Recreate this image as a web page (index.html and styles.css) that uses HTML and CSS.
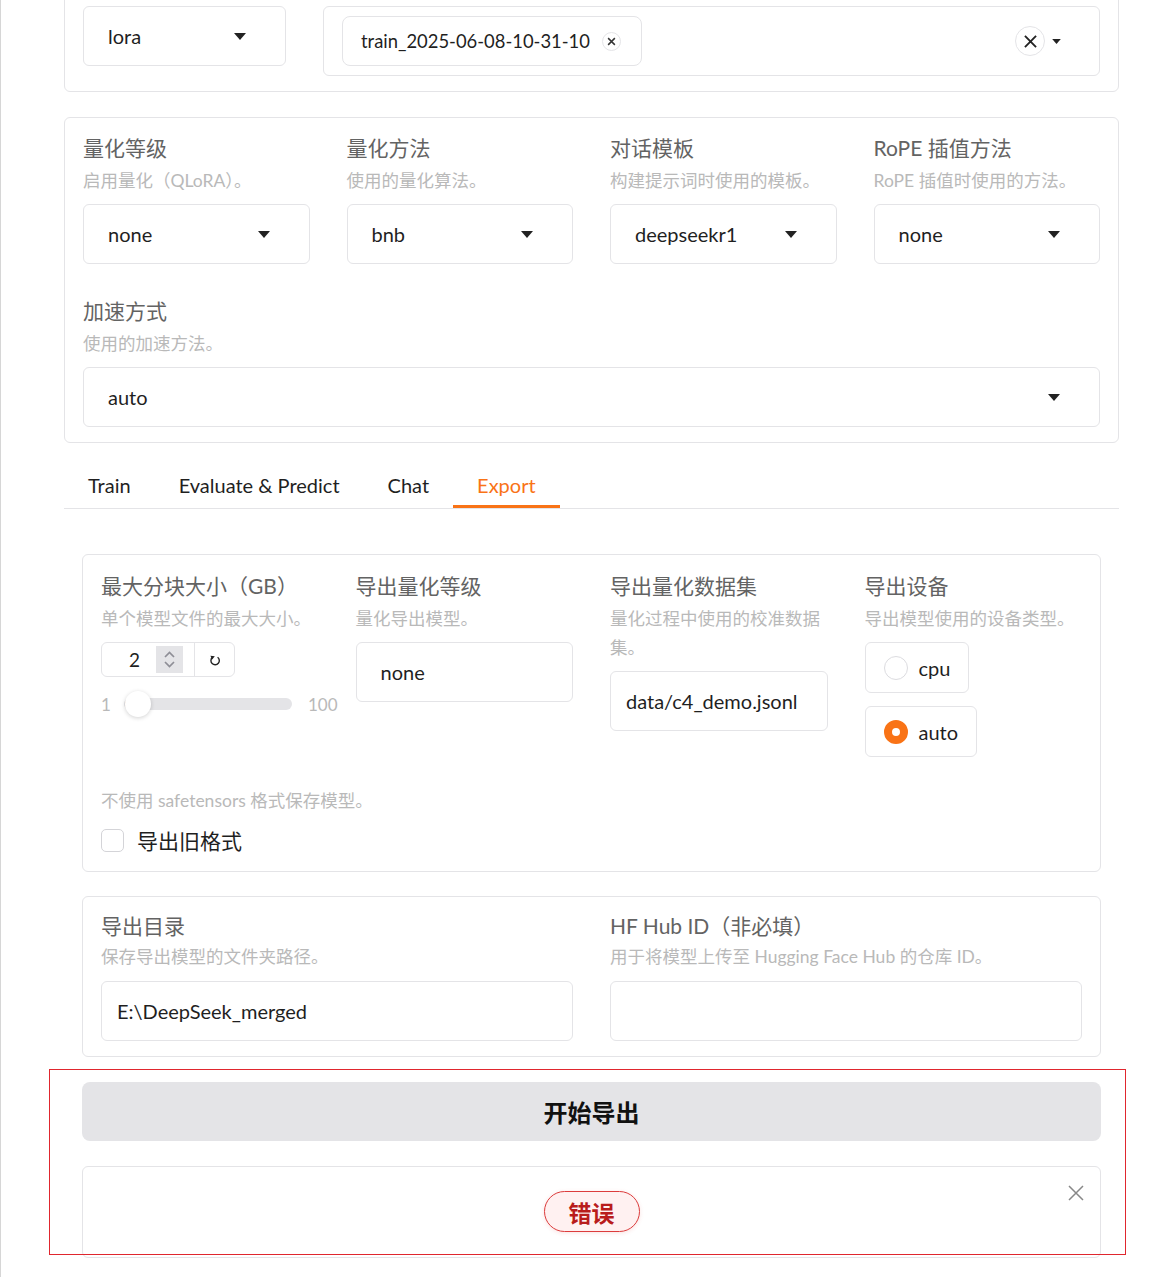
FILE: index.html
```html
<!DOCTYPE html>
<html lang="zh-CN">
<head>
<meta charset="utf-8">
<title>Export</title>
<link rel="stylesheet" href="styles.css">
</head>
<body>
<div class="page">
  <section class="card card-top">
    <div class="model-row">
      <div class="select select-method">
        <span class="val">lora</span>
        <svg class="caret" viewBox="0 0 12 7"><path d="M0 0h12L6 7z"/></svg>
      </div>
      <div class="multiselect">
        <div class="chip">
          <span>train_2025-06-08-10-31-10</span>
          <span class="chip-remove"><svg viewBox="0 0 8 8"><path d="M1 1l6 6M7 1L1 7"/></svg></span>
        </div>
        <div class="multi-tools">
          <span class="clear-btn"><svg viewBox="0 0 14 14"><path d="M1 1l12 12M13 1L1 13"/></svg></span>
          <svg class="caret caret-sm" viewBox="0 0 12 7"><path d="M0 0h12L6 7z"/></svg>
        </div>
      </div>
    </div>
  </section>

  <section class="card card-fields">
    <div class="grid4">
      <div class="field">
        <div class="label">量化等级</div>
        <div class="info">启用量化（QLoRA）。</div>
        <div class="select"><span class="val">none</span><svg class="caret" viewBox="0 0 12 7"><path d="M0 0h12L6 7z"/></svg></div>
      </div>
      <div class="field">
        <div class="label">量化方法</div>
        <div class="info">使用的量化算法。</div>
        <div class="select"><span class="val">bnb</span><svg class="caret" viewBox="0 0 12 7"><path d="M0 0h12L6 7z"/></svg></div>
      </div>
      <div class="field">
        <div class="label">对话模板</div>
        <div class="info">构建提示词时使用的模板。</div>
        <div class="select"><span class="val">deepseekr1</span><svg class="caret" viewBox="0 0 12 7"><path d="M0 0h12L6 7z"/></svg></div>
      </div>
      <div class="field">
        <div class="label">RoPE 插值方法</div>
        <div class="info">RoPE 插值时使用的方法。</div>
        <div class="select"><span class="val">none</span><svg class="caret" viewBox="0 0 12 7"><path d="M0 0h12L6 7z"/></svg></div>
      </div>
    </div>
    <div class="field field-row2">
      <div class="label">加速方式</div>
      <div class="info">使用的加速方法。</div>
      <div class="select"><span class="val">auto</span><svg class="caret" viewBox="0 0 12 7"><path d="M0 0h12L6 7z"/></svg></div>
    </div>
  </section>

  <nav class="tabs">
    <span class="tab">Train</span>
    <span class="tab">Evaluate &amp; Predict</span>
    <span class="tab">Chat</span>
    <span class="tab tab-active">Export</span>
  </nav>

  <div class="tab-body">
    <section class="card card-inner">
      <div class="grid4 grid4-export">
        <div class="field">
          <div class="label">最大分块大小（GB）</div>
          <div class="info">单个模型文件的最大大小。</div>
          <div class="numbox">
            <span class="num">2</span>
            <span class="spin"><svg viewBox="0 0 27 27"><path d="M9 11l4.5-4.5L18 11M9 16l4.5 4.5L18 16"/></svg></span>
            <span class="reset"><svg viewBox="0 0 12 12"><path class="arc" d="M3.4 3.4A4.2 4.2 0 1 0 8.6 3.2"/><path class="head" d="M1.4 1.8L5.8 2.2L3.2 5.6z"/></svg></span>
          </div>
          <div class="slider">
            <span class="min">1</span>
            <span class="track"><span class="fill"></span><span class="thumb"></span></span>
            <span class="max">100</span>
          </div>
        </div>
        <div class="field">
          <div class="label">导出量化等级</div>
          <div class="info">量化导出模型。</div>
          <div class="select"><span class="val">none</span></div>
        </div>
        <div class="field">
          <div class="label">导出量化数据集</div>
          <div class="info">量化过程中使用的校准数据集。</div>
          <div class="textbox"><span class="val">data/c4_demo.jsonl</span></div>
        </div>
        <div class="field">
          <div class="label">导出设备</div>
          <div class="info">导出模型使用的设备类型。</div>
          <div class="radios">
            <label class="radio"><span class="dot"></span><span>cpu</span></label>
            <label class="radio"><span class="dot dot-on"></span><span>auto</span></label>
          </div>
        </div>
      </div>
      <div class="check-field">
        <div class="info">不使用 safetensors 格式保存模型。</div>
        <label class="check"><span class="box"></span><span>导出旧格式</span></label>
      </div>
    </section>

    <section class="card card-inner card-dirs">
      <div class="grid2">
        <div class="field">
          <div class="label">导出目录</div>
          <div class="info">保存导出模型的文件夹路径。</div>
          <div class="textbox"><span class="val">E:\DeepSeek_merged</span></div>
        </div>
        <div class="field">
          <div class="label">HF Hub ID（非必填）</div>
          <div class="info">用于将模型上传至 Hugging Face Hub 的仓库 ID。</div>
          <div class="textbox"><span class="val"></span></div>
        </div>
      </div>
    </section>

    <button class="primary">开始导出</button>

    <div class="status">
      <span class="badge">错误</span>
      <span class="close"><svg viewBox="0 0 16 16"><path d="M1 1l14 14M15 1L1 15"/></svg></span>
    </div>
  </div>

  <div class="annot"></div>
</div>
</body>
</html>
```

FILE: styles.css
```css
* { box-sizing: border-box; }

html, body {
  margin: 0;
  background: #fff;
}

body {
  font-family: Lato, "Noto Sans CJK SC", sans-serif;
  color: #1f1f1f;
}

.page {
  position: relative;
  display: flow-root;
  height: 1277px;
  overflow: hidden;
  border-left: 1px solid #d6d6d6;
  padding-left: 63px;
  width: 1165px;
}

.card {
  width: 1055px;
  background: #fff;
  border: 1px solid #e4e4e7;
  border-radius: 6px;
}

/* top card */
.card-top {
  margin-top: -11px;
  padding: 16px 18px 15px 18px;
}

.model-row {
  display: flex;
  align-items: flex-start;
  gap: 37px;
}

.select {
  display: flex;
  align-items: center;
  justify-content: space-between;
  height: 60px;
  padding: 0 39px 0 24px;
  border: 1px solid #e4e4e7;
  border-radius: 6px;
  background: #fff;
}

.val {
  font-size: 20px;
  color: #1f1f1f;
  white-space: nowrap;
}

.caret {
  width: 12px;
  height: 7px;
  fill: #222;
  flex: none;
}

.select-method { width: 203px; flex: none; }

.multiselect {
  flex: 1;
  height: 70px;
  display: flex;
  align-items: center;
  justify-content: space-between;
  padding: 0 38px 0 18px;
  border: 1px solid #e4e4e7;
  border-radius: 6px;
}

.chip {
  display: flex;
  align-items: center;
  gap: 12px;
  height: 50px;
  padding: 0 20px 0 18px;
  border: 1px solid #e4e4e7;
  border-radius: 8px;
  font-size: 18.4px;
  color: #1f1f1f;
}

.chip-remove {
  width: 19px;
  height: 19px;
  border: 1px solid #e4e4e7;
  border-radius: 50%;
  display: flex;
  align-items: center;
  justify-content: center;
}

.chip-remove svg {
  width: 9px;
  height: 9px;
  stroke: #333;
  stroke-width: 1.3;
}

.multi-tools {
  display: flex;
  align-items: center;
  gap: 7px;
}

.clear-btn {
  width: 30px;
  height: 30px;
  border: 1px solid #e4e4e7;
  border-radius: 50%;
  display: flex;
  align-items: center;
  justify-content: center;
}

.clear-btn svg {
  width: 13px;
  height: 13px;
  stroke: #222;
  stroke-width: 2;
}

.caret-sm { width: 9px; height: 5px; }

/* field cards */
.card-fields {
  margin-top: 25px;
  padding: 17px 18px 15px 18px;
}

.grid4 {
  display: grid;
  grid-template-columns: repeat(4, minmax(0, 1fr));
  column-gap: 37px;
  align-items: start;
}

.label {
  font-size: 21px;
  line-height: 26px;
  color: #636363;
  white-space: nowrap;
}

.info {
  margin-top: 5px;
  font-size: 17.5px;
  line-height: 29px;
  color: #b9b9b9;
}

.field .select,
.field .textbox,
.field .numbox,
.field .radios {
  margin-top: 9px;
}

.field-row2 { margin-top: 34px; }

/* tabs */
.tabs {
  width: 1055px;
  margin-top: 23px;
  display: flex;
  border-bottom: 1px solid #e4e4e7;
}

.tab {
  height: 42px;
  line-height: 38px;
  padding: 0 24px;
  font-size: 20px;
  color: #1f1f1f;
  border-bottom: 3px solid transparent;
}

.tab-active {
  color: #f97316;
  border-bottom-color: #f97316;
}

/* export */
.tab-body {
  margin-top: 45px;
  padding: 0 18px;
  width: 1055px;
}

.card-inner {
  width: auto;
  padding: 18px 18px 18px 18px;
}

.grid4-export .select { padding-left: 24px; }

.numbox {
  width: 134px;
  height: 35px;
  display: flex;
  align-items: center;
  border: 1px solid #e4e4e7;
  border-radius: 6px;
}

.num {
  width: 54px;
  text-align: right;
  padding-right: 16px;
  font-size: 19px;
  color: #1f1f1f;
}

.spin {
  width: 27px;
  height: 27px;
  background: #e4e4e7;
  display: flex;
}

.spin svg {
  width: 27px;
  height: 27px;
  fill: none;
  stroke: #8e8e96;
  stroke-width: 1.7;
}

.reset {
  margin-left: 11px;
  height: 100%;
  flex: 1;
  border-left: 1px solid #e4e4e7;
  display: flex;
  align-items: center;
  justify-content: center;
}

.reset svg {
  width: 12px;
  height: 12px;
}

.reset .arc {
  fill: none;
  stroke: #222;
  stroke-width: 1.4;
}

.reset .head { fill: #222; }

.slider {
  margin-top: 14px;
  display: flex;
  align-items: center;
  height: 26px;
  font-size: 17px;
  color: #b9b9b9;
  white-space: nowrap;
}

.slider .min { width: 23px; flex: none; }

.track {
  position: relative;
  flex: none;
  width: 168px;
  height: 12px;
  border-radius: 6px;
  background: #e4e4e7;
}

.fill {
  position: absolute;
  left: 1px;
  top: 1px;
  width: 8px;
  height: 10px;
  border-radius: 5px 0 0 5px;
  background: #fbbf94;
}

.thumb {
  position: absolute;
  left: 1px;
  top: -7px;
  width: 26px;
  height: 26px;
  border-radius: 50%;
  background: #fff;
  box-shadow: 0 1px 4px rgba(0,0,0,0.18);
}

.slider .max { margin-left: 16px; flex: none; }

.textbox {
  height: 60px;
  display: flex;
  align-items: center;
  padding: 0 15px;
  border: 1px solid #e4e4e7;
  border-radius: 6px;
}

.radios {
  display: flex;
  flex-direction: column;
  align-items: flex-start;
  gap: 13px;
}

.radio {
  display: flex;
  align-items: center;
  gap: 11px;
  height: 51px;
  padding: 0 18px 0 18px;
  border: 1px solid #e4e4e7;
  border-radius: 6px;
  font-size: 20px;
  color: #1f1f1f;
}

.dot {
  width: 24px;
  height: 24px;
  border-radius: 50%;
  border: 1px solid #dcdce0;
  background: #fff;
}

.dot-on {
  border: 8px solid #f97316;
  background: #fff;
}

.check-field { margin-top: 29px; }

.check-field .info { margin-top: 0; }

.check {
  margin-top: 12px;
  display: flex;
  align-items: center;
  gap: 13px;
  height: 26px;
  font-size: 21px;
  color: #1f1f1f;
}

.check .box {
  width: 23px;
  height: 23px;
  border: 1px solid #d4d4d8;
  border-radius: 5px;
}

.card-dirs {
  margin-top: 24px;
  padding: 16px 18px 15px 18px;
}

.card-dirs .info { margin-top: 3px; }

.card-dirs .textbox { margin-top: 10px; }

.grid2 {
  display: grid;
  grid-template-columns: minmax(0, 1fr) minmax(0, 1fr);
  column-gap: 37px;
}

.primary {
  display: block;
  width: 100%;
  height: 59px;
  margin-top: 25px;
  border: none;
  border-radius: 8px;
  background: #e4e4e7;
  font-family: Lato, "Noto Sans CJK SC", sans-serif;
  font-size: 24px;
  font-weight: 700;
  color: #111;
}

.status {
  position: relative;
  margin-top: 25px;
  height: 92px;
  display: flex;
  justify-content: center;
  align-items: flex-start;
  padding-top: 24px;
  border: 1px solid #e4e4e7;
  border-radius: 6px;
}

.badge {
  height: 41px;
  padding: 0 24px;
  display: flex;
  align-items: center;
  border: 1px solid #dc3c3c;
  border-radius: 21px;
  background: #fff1f1;
  box-shadow: 0 1px 4px rgba(220, 60, 60, 0.15);
  color: #b91c1c;
  font-size: 23px;
  font-weight: 700;
}

.close {
  position: absolute;
  right: 16px;
  top: 18px;
  width: 16px;
  height: 16px;
}

.close svg {
  width: 16px;
  height: 16px;
  stroke: #888;
  stroke-width: 1.5;
}

.annot {
  position: absolute;
  left: 48px;
  top: 1069px;
  width: 1077px;
  height: 186px;
  border: 1px solid #e0262e;
  pointer-events: none;
}
```
